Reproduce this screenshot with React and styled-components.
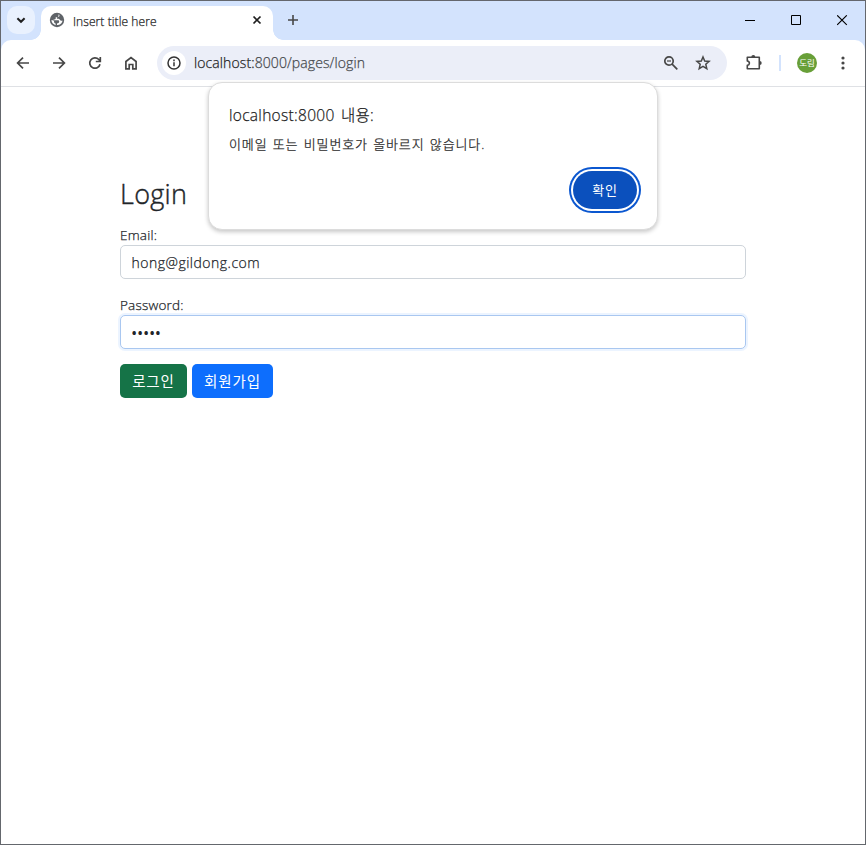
import React from "react";
import styled, { createGlobalStyle } from "styled-components";

const Global = createGlobalStyle`
  *, *::before, *::after { box-sizing: border-box; }
  body {
    margin: 0; background: #fff; font-family: "Open Sans", "Noto Sans CJK KR", sans-serif; font-weight: 300;
    color: #212529; -webkit-text-stroke: 0.25px currentColor;
  }
  button, input { font-family: inherit; font-weight: inherit; margin: 0; }
  button { -webkit-text-stroke: 0; }
  svg { display: block; flex: none; }
`;

const Window = styled.div`
  width: 866px; height: 845px; border: 1px solid #64676d; background: #fff;
  display: flex; flex-direction: column; overflow: hidden;
`;

const TabStrip = styled.header`
  height: 49px; margin-bottom: -10px; padding: 5px 0 10px 6px; background: #d3e3fd;
  display: flex; flex: none;
`;

const TabSearch = styled.button`
  width: 28px; height: 28px; border: 0; border-radius: 10px; background: #e9f1fe; padding: 0;
  display: grid; place-items: center;
`;

const Tab = styled.div`
  position: relative; width: 232px; height: 34px; margin-left: 6px; padding: 0 8px;
  border-radius: 10px 10px 0 0; background: #fff; display: flex; align-items: flex-start;
  &::before, &::after { content: ""; position: absolute; bottom: 0; width: 10px; height: 10px; }
  &::before { left: -10px; background: radial-gradient(circle at 0 0, transparent 9.5px, #fff 10px); }
  &::after { right: -10px; background: radial-gradient(circle at 100% 0, transparent 9.5px, #fff 10px); }
`;

const TabTitle = styled.span`
  flex: 1; margin-left: 8px; font-size: 12px; line-height: 31px; color: #1f1f1f; letter-spacing: 0.08px;
`;

const CloseIcon = styled.svg`margin: 9px 3px 0 0;`;
const GlobeIcon = styled.svg`margin-top: 6px;`;
const PlusIcon = styled.svg`margin: 7px 0 0 13px;`;

const Caption = styled.div`
  margin-left: auto; display: flex; height: 38px;
`;
const CaptionButton = styled.button`
  width: 46px; height: 28px; border: 0; background: transparent; padding: 0; display: grid; place-items: center;
`;

const Toolbar = styled.nav`
  position: relative; height: 47px; flex: none; background: #fff; border-bottom: 1px solid #dfe1e5;
  border-radius: 10px 10px 0 0; display: flex; align-items: center; padding: 0 4px 0 4px;
`;
const ToolButton = styled.button`
  width: 36px; height: 36px; border: 0; background: transparent; padding: 0; display: grid; place-items: center; flex: none;
  margin-left: ${p => p.$offset || 0}px;
`;
const Omnibox = styled.div`
  width: 570px; height: 34px; margin-left: 8px; border-radius: 17px; background: #ebeef8;
  display: flex; align-items: center; padding: 0 8px 0 5px;
`;
const SiteInfo = styled.div`
  width: 24px; height: 24px; border-radius: 50%; background: #fff; display: grid; place-items: center;
`;
const Url = styled.span`
  flex: 1; margin-left: 8px; font-size: 14px; line-height: 20px; color: #474a4d; letter-spacing: 0.1px;
  b { font-weight: inherit; color: #1f1f1f; }
`;
const OmniAction = styled.span`
  width: 32px; display: grid; place-items: center;
`;
const Separator = styled.span`
  width: 2px; height: 16px; margin-left: 7px; background: #d3e3fd;
`;
const Avatar = styled.span`
  width: 20px; height: 20px; margin: 0 18px 0 16px; border-radius: 50%; background: #689f38; color: #fff;
  font-size: 8.5px; font-weight: 400; line-height: 20px; text-align: center; -webkit-text-stroke: 0;
`;

const Content = styled.main`
  width: 626px; margin: 90px 0 0 119px; flex: none;
`;
const Heading = styled.h1`
  margin: 0 0 16px; font-size: 27px; line-height: 33px; height: 32px; font-weight: inherit; letter-spacing: 0.3px;
  -webkit-text-stroke-width: 0.4px;
`;
const Field = styled.div`margin-bottom: ${p => p.$gap}px;`;
const Label = styled.label`
  display: block; height: 20px; font-size: 13.5px; line-height: 20px; letter-spacing: 0.2px;
`;
const Input = styled.input`
  display: block; width: 100%; height: 34px; border: 1px solid ${p => p.$focus ? "#a9c7f0" : "#ced4da"};
  border-radius: 5px; padding: 1px 11px 0 10.5px; background: #fff; color: #212529; font-size: 14px; outline: 0;
  letter-spacing: ${p => p.$focus ? "0.7px" : "0.5px"}; font-weight: ${p => p.$focus ? 600 : "inherit"};
  -webkit-text-stroke: ${p => p.$focus ? "0" : "0.25px currentColor"};
  box-shadow: ${p => p.$focus ? "0 0 0 2px rgba(13,110,253,.08)" : "none"};
`;
const Actions = styled.div`display: flex; gap: 5px;`;
const Button = styled.button`
  width: ${p => p.$w}px; height: 34px; border: 0; border-radius: 5px; padding: 1px 0 0;
  background: ${p => p.$bg}; color: #fff; font-size: 14.5px; font-weight: 400; line-height: 33px; letter-spacing: 0.9px;
`;

const Dialog = styled.section`
  position: absolute; left: 208px; top: 82px; width: 450px; height: 148px; padding: 21px 20px 20px;
  background: #fff; border: 1px solid #dcdcdc; border-radius: 14px; box-shadow: 0 2px 4px rgba(0,0,0,.22);
  display: flex; flex-direction: column;
`;
const DialogTitle = styled.h2`
  margin: 0; font-size: 15.5px; line-height: 22px; font-weight: inherit; color: #1f1f1f; letter-spacing: 0.3px; word-spacing: 2px;
`;
const DialogText = styled.p`
  margin: 8px 0 0; font-size: 13px; line-height: 20px; color: #1f1f1f; letter-spacing: 0.88px; word-spacing: 1px;
`;
const Confirm = styled.button`
  width: 64px; height: 38px; margin: auto 0 0 auto; border: 0; border-radius: 19px; background: #0b50bd; color: #fff;
  font-size: 13px; font-weight: 400; line-height: 38px; padding: 0; letter-spacing: 0.8px;
  box-shadow: 0 0 0 2px #fff, 0 0 0 4px #0b57d0;
`;

const Line = ({ size = 16, d, w = 1.7, color = "#474747", fill = "none", children }) => (
  <svg width={size} height={size} viewBox={`0 0 ${size} ${size}`} fill={fill} stroke={color} strokeWidth={w}>
    {d && <path d={d} />}{children}
  </svg>
);

const Globe = () => (
  <GlobeIcon width="16" height="16" viewBox="0 0 16 16">
    <circle cx="8" cy="8" r="7.2" fill="#5f6368" />
    <path d="M9.500 2.500v1.300c0 .8-.7 1.500-1.500 1.500H6.700v1.300c0 .5-.5.9-1 .9H4.600v.8h4.300c.8 0 1.300.5 1.300 1.200 0 1.200-.9 2-2.200 2v1.600c2.900 0 5.300-2 5.500-4.700-1 .5-2.300.2-2.700-.7-.3-.8-.9-1-1.900-1-1 0-1.300-.7-.7-1.300.5-.6 1.400-.2 1.900-.8.5-.5.6-1.200 0-2.100zM2.400 8.100c.1 2.300 1.700 4.500 4.200 5.100v-1.600c-1-.2-1.500-.9-1.500-1.800 0-.9-.9-1.500-2.700-1.700z" fill="#fff" />
  </GlobeIcon>
);

const ExtensionIcon = () => (
  <svg width="20" height="20" viewBox="0 0 20 20">
    <path d="M3.300 4.300h12v11.400h-12v-3.300c2.800-.5 2.800-3.900 0-4.400z" fill="none" stroke="#474747" strokeWidth="1.600" strokeLinejoin="round" />
    <path d="M7.300 4a2 2 0 0 1 4 0zM15.700 8a2 2 0 0 1 0 4z" fill="#474747" />
  </svg>
);

export default function App() {
  return (
    <>
      <Global />
      <Window>
        <TabStrip>
          <TabSearch aria-label="Search tabs"><Line d="M4.400 6.200L8 9.800l3.600-3.600" w={2} color="#1f1f1f" /></TabSearch>
          <Tab>
            <Globe />
            <TabTitle>Insert title here</TabTitle>
            <CloseIcon width="10" height="10" viewBox="0 0 10 10" stroke="#1f1f1f" strokeWidth="1.7"><path d="M1.500 1.500l7 7M8.500 1.500l-7 7" /></CloseIcon>
          </Tab>
          <PlusIcon width="14" height="14" viewBox="0 0 14 14" stroke="#474747" strokeWidth="1.6"><path d="M7 2v10M2 7h10" /></PlusIcon>
          <Caption>
            <CaptionButton aria-label="Minimize"><Line size={11} d="M0 5.500h10" w={1} color="#000" /></CaptionButton>
            <CaptionButton aria-label="Maximize"><Line size={11} d="M.5.5h9v9h-9z" w={1} color="#000" /></CaptionButton>
            <CaptionButton aria-label="Close"><Line size={11} d="M.2.300l9.600 9.600M9.800.300l-9.600 9.600" w={1.1} color="#000" /></CaptionButton>
          </Caption>
        </TabStrip>
        <Toolbar>
          <ToolButton aria-label="Back"><Line d="M14 8H3M8 2.600L2.600 8 8 13.400" /></ToolButton>
          <ToolButton aria-label="Forward"><Line d="M2 8h11M8 2.600L13.400 8 8 13.400" /></ToolButton>
          <ToolButton aria-label="Reload"><Line d="M13 9.200A5.200 5.200 0 1 1 11.800 4.500L13.200 6M13.300 2v4.500H8.800" /></ToolButton>
          <ToolButton aria-label="Home"><Line d="M2.900 6.500L8 2.600l5.100 3.900v7.400H9.800V9.500H6.200v4.400H2.900z" /></ToolButton>
          <Omnibox>
            <SiteInfo>
              <Line w={1.5} color="#333"><circle cx="8" cy="8" r="6" /><path d="M8 7.200v4M8 4.600v1.600" /></Line>
            </SiteInfo>
            <Url><b>localhost:</b>8000/pages/login</Url>
            <OmniAction><Line><circle cx="6" cy="6" r="4.200" /><path d="M9.100 9.100l5.200 5.200" /><path d="M4 6h4" strokeWidth="1.200" /></Line></OmniAction>
            <OmniAction><Line w={1.5} d="M8 2l1.700 4 4.400.4-3.300 2.900 1 4.300L8 11.300l-3.800 2.300 1-4.300-3.300-2.900L6.300 6z" /></OmniAction>
          </Omnibox>
          <ToolButton aria-label="Extensions" $offset={9}><ExtensionIcon /></ToolButton>
          <Separator />
          <Avatar>도림</Avatar>
          <Line fill="#474747" w={0}><circle cx="8" cy="3" r="1.600" /><circle cx="8" cy="8" r="1.600" /><circle cx="8" cy="13" r="1.600" /></Line>
        </Toolbar>
        <Content>
          <Heading>Login</Heading>
          <Field $gap={16}>
            <Label htmlFor="email">Email:</Label>
            <Input id="email" type="text" defaultValue="hong@gildong.com" />
          </Field>
          <Field $gap={15}>
            <Label htmlFor="password">Password:</Label>
            <Input id="password" type="password" defaultValue="12345" $focus />
          </Field>
          <Actions>
            <Button $w={67} $bg="#157347">로그인</Button>
            <Button $w={81} $bg="#0d6efd">회원가입</Button>
          </Actions>
        </Content>
      </Window>
      <Dialog role="alertdialog">
        <DialogTitle>localhost:8000 내용:</DialogTitle>
        <DialogText>이메일 또는 비밀번호가 올바르지 않습니다.</DialogText>
        <Confirm>확인</Confirm>
      </Dialog>
    </>
  );
}
